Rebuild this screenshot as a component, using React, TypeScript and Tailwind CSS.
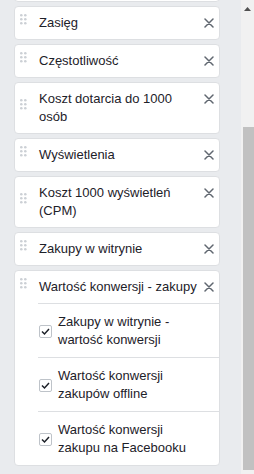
import React from 'react';

type Column = {
  id: string;
  label: string;
  children?: string[];
};

const columns: Column[] = [
  { id: 'reach', label: 'Zasięg' },
  { id: 'frequency', label: 'Częstotliwość' },
  { id: 'cpr', label: 'Koszt dotarcia do 1000 osób' },
  { id: 'impressions', label: 'Wyświetlenia' },
  { id: 'cpm', label: 'Koszt 1000 wyświetleń (CPM)' },
  { id: 'purchases', label: 'Zakupy w witrynie' },
  {
    id: 'purchase_value',
    label: 'Wartość konwersji - zakupy',
    children: [
      'Zakupy w witrynie - wartość konwersji',
      'Wartość konwersji zakupów offline',
      'Wartość konwersji zakupu na Facebooku',
    ],
  },
];

const DragHandle = () => (
  <svg width="8" height="12" viewBox="0 0 8 12" className="shrink-0 mb-[6px]">
    {[1.3, 5.3, 9.3].map((cy) =>
      [1.3, 5.3].map((cx) => <circle key={`${cx}-${cy}`} cx={cx} cy={cy} r="1.3" fill="#ccd0d5" />)
    )}
  </svg>
);

const CloseIcon = () => (
  <svg width="10" height="10" viewBox="0 0 10 10" className="block">
    <path d="M1 1 L9 9 M9 1 L1 9" stroke="#606770" strokeWidth="1.5" strokeLinecap="round" />
  </svg>
);

const Checkbox = () => (
  <span className="flex w-[13px] h-[13px] shrink-0 items-center justify-center rounded-[2px] border border-[#bec3c9] bg-white">
    <svg width="11" height="11" viewBox="0 0 11 11">
      <path d="M2 5.5 L4.5 8 L9 3" fill="none" stroke="#1d2129" strokeWidth="1.5" />
    </svg>
  </span>
);

const ColumnCard = ({ column }: { column: Column }) => (
  <div className="bg-white border border-[#dddfe2] rounded-[4px]">
    {/* header row */}
    <div className="flex py-[7px] pl-[5px] pr-[4px]">
      <div className="flex w-[19px] shrink-0 items-center">
        <DragHandle />
      </div>
      <div className="flex-1 min-w-0 pr-[6px] text-[13px] leading-[18px] text-[#1d2129]">{column.label}</div>
      <div className="flex h-[18px] w-[12px] shrink-0 items-center justify-center">
        <CloseIcon />
      </div>
    </div>

    {/* sub metrics */}
    {column.children && (
      <div className="ml-[23px]">
        {column.children.map((child) => (
          <div key={child} className="flex items-center gap-[6px] border-t border-[#dddfe2] pt-[9px] pb-[8px] pl-px pr-[22px]">
            <Checkbox />
            <span className="text-[13px] leading-[18px] text-[#1d2129]">{child}</span>
          </div>
        ))}
      </div>
    )}
  </div>
);

export default function App() {
  return (
    <div className="flex w-[254px] h-[474px] overflow-hidden bg-[#e9ebee]" style={{ fontFamily: '"Liberation Sans", Arial, sans-serif' }}>
      <div className="w-[241px] shrink-0 pl-[14px] pr-[21px]">
        <div className="-mt-[32px] flex flex-col gap-[4px]">
          {/* card scrolled out above the view, only its bottom edge shows */}
          <div className="h-[34px] bg-white border border-[#dddfe2] rounded-[4px]" />
          {columns.map((column) => (
            <ColumnCard key={column.id} column={column} />
          ))}
        </div>
      </div>

      {/* scrollbar */}
      <div className="flex w-[13px] shrink-0 flex-col bg-[#f1f1f1]">
        <div className="flex h-[127px] justify-center pt-[7px]">
          <svg width="7" height="4" viewBox="0 0 7 4">
            <path d="M0 4 L3.5 0 L7 4 Z" fill="#505050" />
          </svg>
        </div>
        <div className="ml-[2px] h-[343px] w-[11px] bg-[#c1c1c1]" />
      </div>
    </div>
  );
}
